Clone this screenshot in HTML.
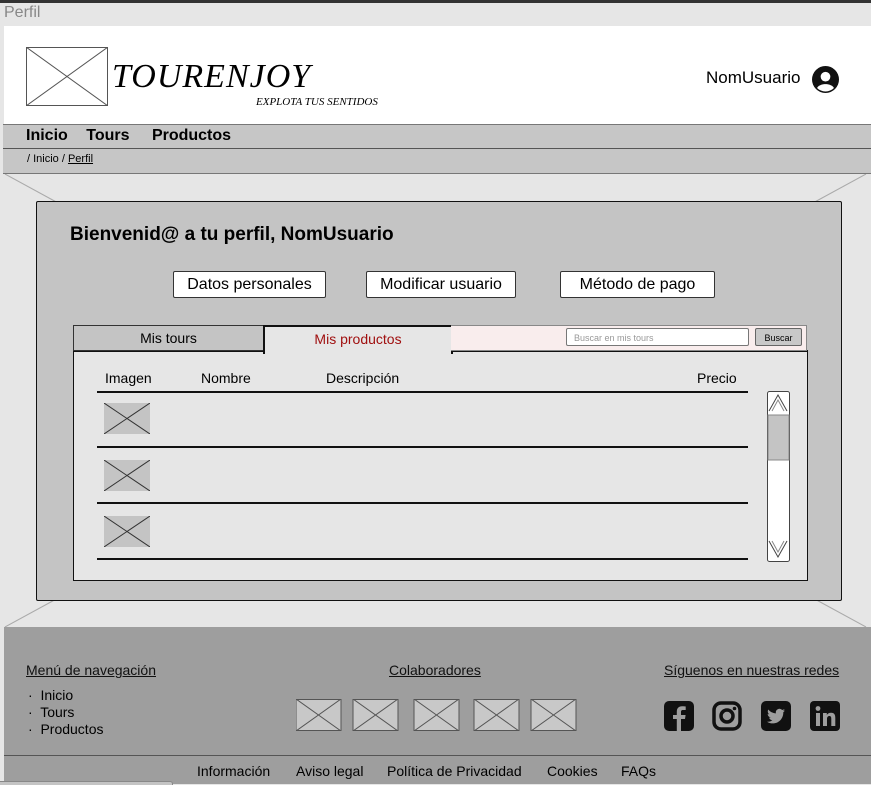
<!DOCTYPE html><html><head><meta charset="utf-8"><style>
body{margin:0;width:871px;height:784px;position:relative;overflow:hidden;font-family:"Liberation Sans",sans-serif;background:#e6e6e6}
.a{position:absolute}
.btn{position:absolute;background:#fff;border:1px solid #333;border-radius:2px;font-size:16px;text-align:center;line-height:25px;box-sizing:border-box;height:27px}
.hl{position:absolute;left:97px;width:651px;height:2px;background:#111}
.img{position:absolute;left:104px;width:46px;height:31px;background:#c4c4c4}
.ft{font-size:14px;color:#111;text-decoration:underline}
</style></head><body>
<div class="a" style="left:0;top:0;width:871px;height:3px;background:#333"></div>
<div class="a" style="left:4px;top:4px;font-size:16px;color:#888">Perfil</div>
<div class="a" style="left:4px;top:26px;width:867px;height:98px;background:#fff"></div>
<svg class="a" style="left:26px;top:47px" width="82" height="59"><rect x=".5" y=".5" width="81" height="58" fill="none" stroke="#555"/><path d="M0 0L82 59M82 0L0 59" stroke="#555"/></svg>
<div class="a" style="left:112px;top:58px;font-family:'Liberation Serif',serif;font-style:italic;font-size:34px;letter-spacing:1px">TOURENJOY</div>
<div class="a" style="left:256px;top:96px;font-family:'Liberation Serif',serif;font-style:italic;font-size:11px">EXPLOTA TUS SENTIDOS</div>
<div class="a" style="left:706px;top:68px;font-size:17px">NomUsuario</div>
<svg class="a" style="left:812px;top:66px" width="27" height="27" viewBox="0 0 24 24"><circle cx="12" cy="12" r="12" fill="#111"/><circle cx="12" cy="9.5" r="4.3" fill="#fff"/><path d="M4.5 19.5c2.5-4.5 12.5-4.5 15 0a10.5 10.5 0 0 1-15 0z" fill="#fff"/></svg>
<div class="a" style="left:3px;top:124px;width:868px;height:23px;background:#c6c6c6;border-top:1px solid #777;border-bottom:1px solid #555"></div>
<div class="a" style="left:26px;top:127px;font-size:16px;font-weight:bold;word-spacing:14px">Inicio Tours <span style="margin-left:4px">Productos</span></div>
<div class="a" style="left:3px;top:149px;width:868px;height:24px;background:#c6c6c6;border-bottom:1px solid #777"></div>
<div class="a" style="left:27px;top:153px;font-size:11px">/ Inicio / <u>Perfil</u></div>
<svg class="a" style="left:0;top:174px" width="871" height="453"><path d="M5 0L60 30M866 0L811 30M5 453L60 423M866 453L811 423" stroke="#aaa"/></svg>
<div class="a" style="left:36px;top:201px;width:804px;height:398px;background:#c4c4c4;border:1px solid #111;border-radius:2px"></div>
<div class="a" style="left:70px;top:224px;font-size:19px;font-weight:bold">Bienvenid@ a tu perfil, NomUsuario</div>
<div class="btn" style="left:173px;top:271px;width:153px">Datos personales</div>
<div class="btn" style="left:366px;top:271px;width:150px">Modificar usuario</div>
<div class="btn" style="left:560px;top:271px;width:155px">Método de pago</div>
<div class="a" style="left:73px;top:350px;width:733px;height:228px;background:#e6e6e6;border:1px solid #111;border-top:2px solid #111"></div>
<div class="a" style="left:73px;top:325px;width:189px;height:24px;background:#c4c4c4;border:1px solid #333;font-size:14px;text-align:center;line-height:24px">Mis tours</div>
<div class="a" style="left:263px;top:325px;width:186px;height:27px;background:#e6e6e6;border:2px solid #111;border-bottom:none;font-size:14px;color:#a01010;text-align:center;line-height:24px">Mis productos</div>
<div class="a" style="left:451px;top:325px;width:355px;height:24px;background:#f9eded;border:1px solid #888;border-left:none"></div>
<div class="a" style="left:566px;top:328px;width:183px;height:18px;background:#fff;border:1px solid #777;border-radius:2px;font-size:9px;color:#999;line-height:18px;padding-left:7px;box-sizing:border-box">Buscar en mis tours</div>
<div class="a" style="left:755px;top:328px;width:47px;height:18px;background:#c8c8c8;border:1px solid #666;border-radius:2px;font-size:9px;line-height:18px;text-align:center;box-sizing:border-box">Buscar</div>
<div class="a" style="left:105px;top:370px;font-size:14px">Imagen</div>
<div class="a" style="left:201px;top:370px;font-size:14px">Nombre</div>
<div class="a" style="left:326px;top:370px;font-size:14px">Descripción</div>
<div class="a" style="left:697px;top:370px;font-size:14px">Precio</div>
<div class="hl" style="top:391px"></div><div class="hl" style="top:446px"></div><div class="hl" style="top:502px"></div><div class="hl" style="top:558px"></div>
<svg class="img" style="top:403px" viewBox="0 0 46 31" preserveAspectRatio="none"><path d="M0 0L46 31M46 0L0 31" stroke="#333"/></svg>
<svg class="img" style="top:460px" viewBox="0 0 46 31" preserveAspectRatio="none"><path d="M0 0L46 31M46 0L0 31" stroke="#333"/></svg>
<svg class="img" style="top:516px" viewBox="0 0 46 31" preserveAspectRatio="none"><path d="M0 0L46 31M46 0L0 31" stroke="#333"/></svg>
<svg class="a" style="left:767px;top:391px" width="23" height="171"><rect x=".5" y=".5" width="22" height="170" rx="2" fill="#fff" stroke="#444"/><rect x="1" y="24" width="21" height="45" fill="#c4c4c4" stroke="#888"/><path d="M2 20L11 4L20 20M2 150L11 166L20 150" fill="none" stroke="#444"/><path d="M5 20L11 9L17 20M5 150L11 161L17 150" fill="none" stroke="#888"/></svg>
<div class="a" style="left:4px;top:627px;width:867px;height:157px;background:#9e9e9e"></div>
<div class="a ft" style="left:26px;top:662px">Menú de navegación</div>
<div class="a ft" style="left:389px;top:662px">Colaboradores</div>
<div class="a ft" style="left:664px;top:662px">Síguenos en nuestras redes</div>
<div class="a" style="left:28px;top:687px;font-size:14px;line-height:17px">·&nbsp; Inicio<br>·&nbsp; Tours<br>·&nbsp; Productos</div>
<svg class="a" style="left:296px;top:699px" width="282" height="32"><g fill="#c8c8c8" stroke="#555"><rect x="0" y=".5" width="45" height="31"/><rect x="57" y=".5" width="45" height="31"/><rect x="118" y=".5" width="45" height="31"/><rect x="178" y=".5" width="45" height="31"/><rect x="235" y=".5" width="45" height="31"/></g><path d="M0 0L45 32M45 0L0 32M57 0L102 32M102 0L57 32M118 0L163 32M163 0L118 32M178 0L223 32M223 0L178 32M235 0L280 32M280 0L235 32" stroke="#555"/></svg>
<svg class="a" style="left:664px;top:701px" width="30" height="30" viewBox="0 0 30 30"><rect width="30" height="30" rx="5" fill="#111"/><path d="M17 30V18h4l.6-4H17v-3c0-1.2.4-2 2-2h2.7V5.5c-.5 0-2-.2-3.6-.2-3.5 0-5.3 2-5.3 5.5v3.2H9v4h3.8v12z" fill="#9e9e9e"/></svg>
<svg class="a" style="left:712px;top:701px" width="30" height="30" viewBox="0 0 30 30"><rect x="2" y="2" width="26" height="26" rx="7" fill="none" stroke="#111" stroke-width="3.5"/><circle cx="15" cy="15" r="6" fill="none" stroke="#111" stroke-width="3.5"/><circle cx="22.5" cy="7.5" r="1.8" fill="#111"/></svg>
<svg class="a" style="left:761px;top:701px" width="30" height="30" viewBox="0 0 30 30"><rect width="30" height="30" rx="5" fill="#111"/><path d="M24 9.5c-.7.3-1.4.5-2.1.6.8-.5 1.3-1.2 1.6-2-.7.4-1.5.7-2.3.9a3.7 3.7 0 0 0-6.3 3.4c-3-.2-5.8-1.6-7.6-3.9-1 1.7-.5 3.8 1.1 4.9-.6 0-1.200-.2-1.7-.5 0 1.8 1.300 3.300 3 3.6-.5.2-1.1.2-1.7.1.5 1.5 1.9 2.5 3.4 2.6A7.5 7.5 0 0 1 6 20.7c1.7 1.1 3.7 1.7 5.7 1.7 6.9 0 10.8-5.9 10.6-11.2.7-.5 1.3-1.1 1.7-1.7z" fill="#9e9e9e"/></svg>
<svg class="a" style="left:810px;top:701px" width="30" height="30" viewBox="0 0 30 30"><rect width="30" height="30" rx="4" fill="#111"/><rect x="6" y="12" width="4" height="13" fill="#9e9e9e"/><circle cx="8" cy="7.5" r="2.4" fill="#9e9e9e"/><path d="M13 12h3.8v2c.7-1.3 2.2-2.3 4.3-2.3 3.4 0 4.2 2.2 4.2 5.3V25h-4v-7c0-1.7-.3-3-1.9-3s-2.4 1.2-2.4 3v7h-4z" fill="#9e9e9e"/></svg>
<div class="a" style="left:4px;top:755px;width:867px;height:1px;background:#555"></div>
<div class="a" style="left:197px;top:763px;font-size:14px">Información</div>
<div class="a" style="left:296px;top:763px;font-size:14px">Aviso legal</div>
<div class="a" style="left:387px;top:763px;font-size:14px">Política de Privacidad</div>
<div class="a" style="left:547px;top:763px;font-size:14px">Cookies</div>
<div class="a" style="left:621px;top:763px;font-size:14px">FAQs</div>
<div class="a" style="left:0;top:781px;width:172px;height:3px;background:#c4c4c4;border-top:1px solid #888;border-right:1px solid #888;border-radius:0 3px 0 0"></div>
</body></html>
